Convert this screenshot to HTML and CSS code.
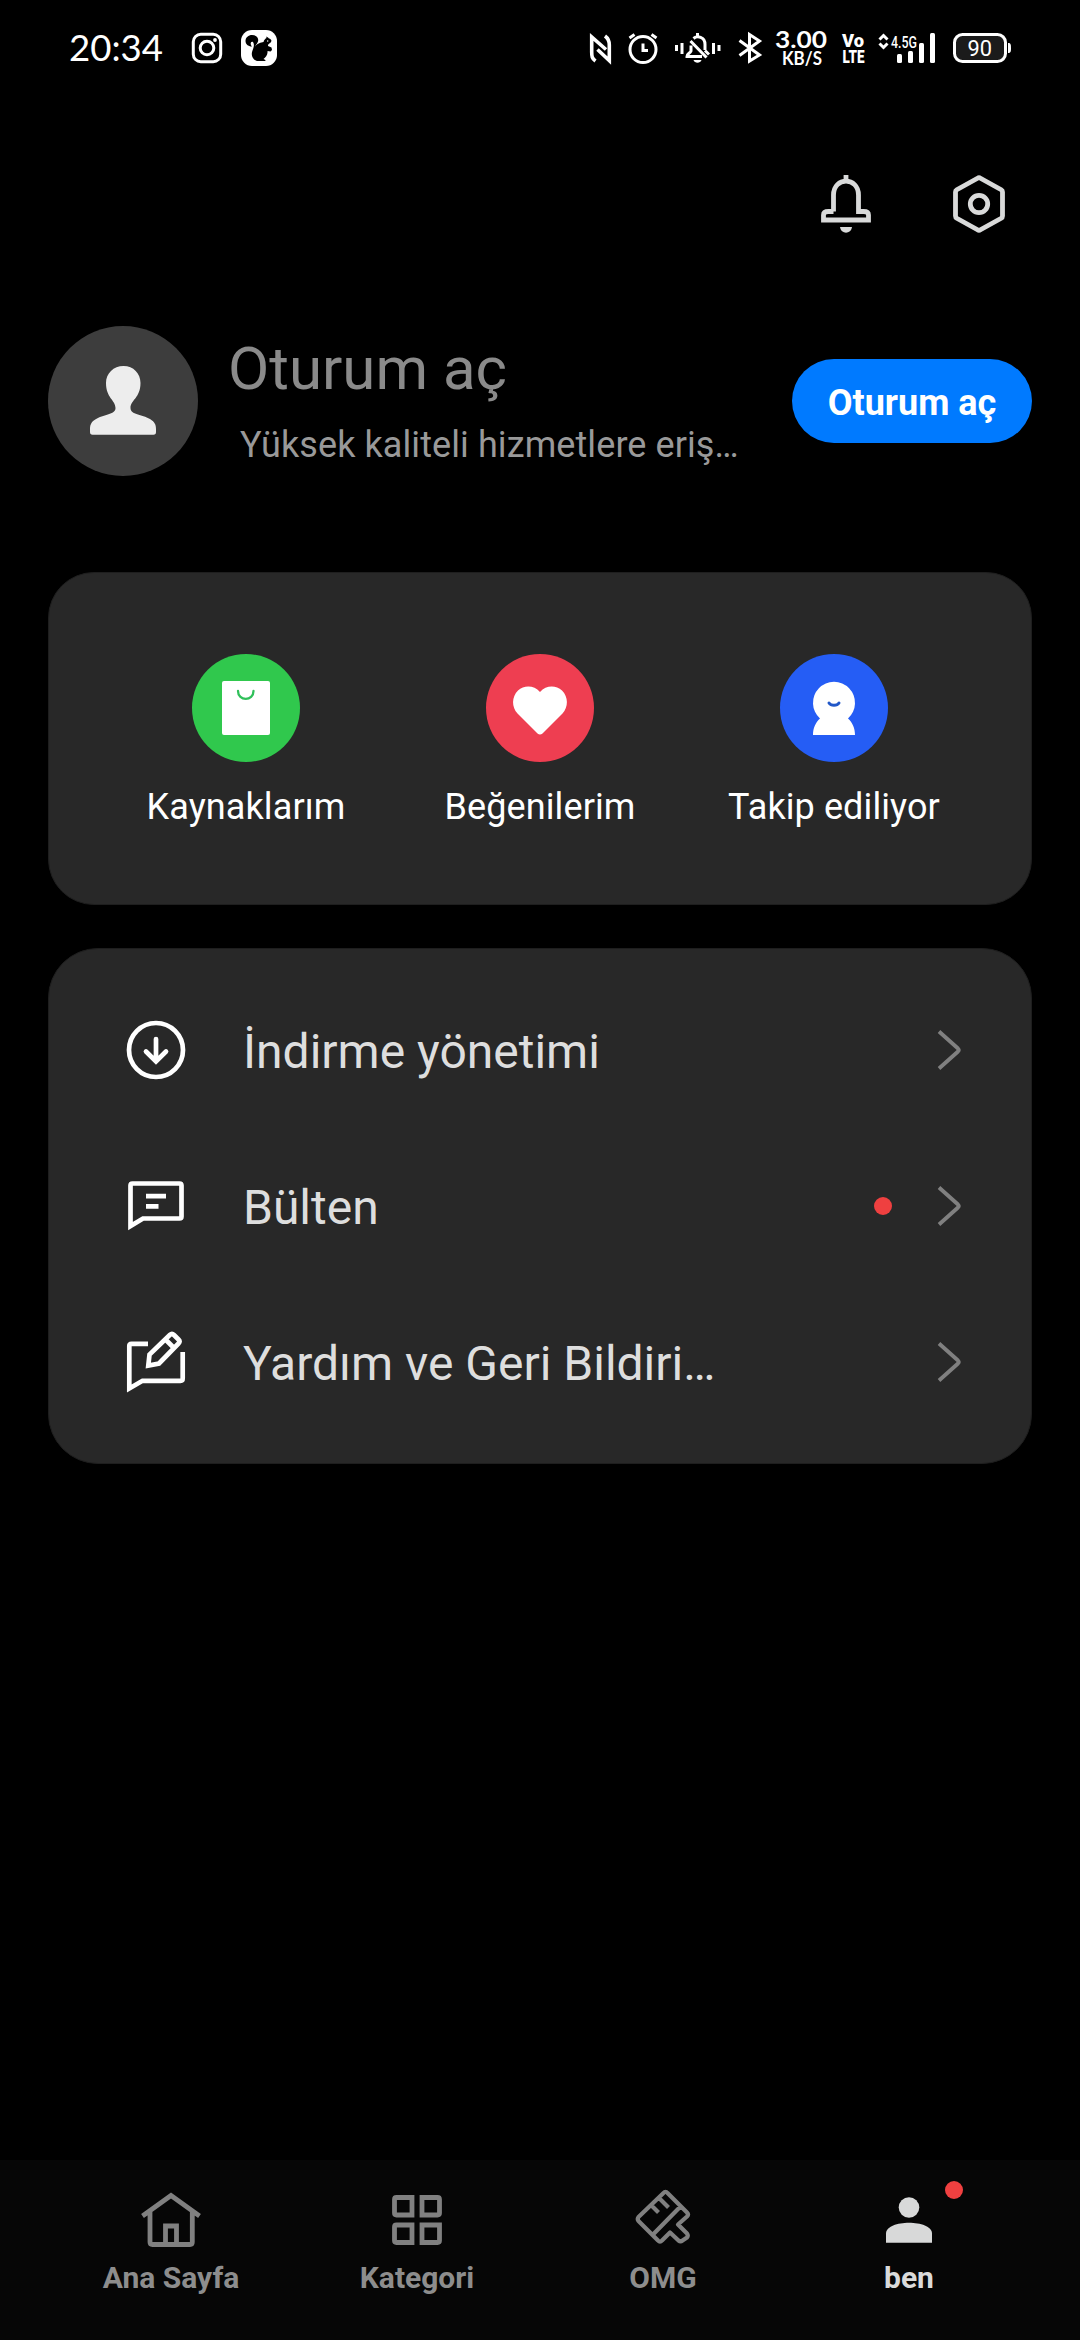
FILE: index.html
```html
<!DOCTYPE html>
<html lang="tr">
<head>
<meta charset="utf-8">
<title>Profil</title>
<link rel="stylesheet" href="styles.css">
</head>
<body>
<div class="screen">
  <header class="status">
    <svg class="status-left" width="240" height="96" viewBox="60 0 240 96">
      <text class="clock" x="69" y="61" textLength="94" lengthAdjust="spacingAndGlyphs">20:34</text>
      <g class="line">
        <rect x="193.3" y="34.3" width="27.4" height="27.4" rx="7.5"/>
        <circle cx="207" cy="48" r="6.8"/>
      </g>
      <circle class="solid" cx="215" cy="40" r="1.9"/>
      <rect class="solid" x="241" y="30" width="36" height="36" rx="11"/>
      <path class="ink" d="M252 46.500C248 46.500 245.500 44 245.500 41C245.500 37.500 248.500 35 252 35C256.500 35 259 38 258 41.500C257.200 44 255 45.500 254 48C255.500 44.500 259 42.500 263.500 42C264 40 265.500 38.500 266.500 38L266.300 36.500L268 37.500L269 38.500C271 39 272 40.500 271 42C270 43.500 268 43.500 268 46L271.500 47.500L272 50L270.500 51.500L267.500 51C268 54.500 265.500 57.500 263.500 59C265 59.500 265.500 60 265.500 61H257C252 59.500 250.800 54.500 252.500 50.500C254 47 254.500 44 253 42C251 40.500 249.500 44 252 46.500Z"/>
      <circle class="solid" cx="267.700" cy="41" r=".7"/>
    </svg>
    <svg class="status-right" width="460" height="96" viewBox="570 0 460 96">
      <g class="line">
        <path class="nfc" d="M595.500 61C592 58.500 591.700 56.500 591.700 52V37L606 49.500M605 36C608.500 38.500 609.300 41 609.300 45V60.500L597.500 49.500"/>
        <circle cx="643" cy="49.500" r="13"/>
        <path d="M629.500 38L634.500 34.500M656.500 38L651.500 34.500M643 43.500V50.500H648"/>
        <path d="M676.500 45V51M682 43V54M713.500 43V54M719 45V51M690.500 41L706.500 57.500M691 45.500V51C690 53.500 687 53.500 687 56.500H702M693.500 38.500C697 35.500 705 36.500 705 44.500V50M697.500 33V36M705 50.500L709 54.500"/>
        <path d="M739.500 40.500L759.500 55L749.500 61V34.500L759.500 41L739.500 55.500"/>
        <rect class="battery" x="954.500" y="34.500" width="51" height="27" rx="8"/>
      </g>
      <path class="solid" d="M693.500 60H701.500C700.500 63.500 694.500 63.500 693.500 60ZM1008 43C1011 43 1011 45 1011 48S1011 53 1008 53Z"/>
      <text class="net" x="775" y="47.500" textLength="52" lengthAdjust="spacingAndGlyphs">3.00</text>
      <text class="unit" x="782" y="65" textLength="40" lengthAdjust="spacingAndGlyphs">KB/S</text>
      <text class="volte" x="842" y="47" textLength="22" lengthAdjust="spacingAndGlyphs">Vo</text>
      <text class="volte" x="842.500" y="63" textLength="22" lengthAdjust="spacingAndGlyphs">LTE</text>
      <path class="line" d="M879.500 39.500L883.500 35.500L887.500 39.500M879.500 43.500L883.500 47.500L887.500 43.500"/>
      <text class="gen" x="891" y="47.500" textLength="26" lengthAdjust="spacingAndGlyphs">4.5G</text>
      <g class="solid">
        <rect x="897" y="54" width="5" height="9" rx="1.500"/>
        <rect x="908" y="51" width="5" height="12" rx="1.500"/>
        <rect x="919" y="43" width="5" height="20" rx="1.500"/>
        <rect x="930" y="33" width="5" height="30" rx="1.500"/>
      </g>
      <text class="percent" x="967.500" y="55.500" textLength="24.500" lengthAdjust="spacingAndGlyphs">90</text>
    </svg>
  </header>

  <div class="toolbar">
    <svg width="60" height="66" viewBox="816 171 60 66" class="tool">
      <path d="M846 175V181M833.500 211.500V195C833.500 176.500 858.500 176.500 858.500 195V211.500H863.500Q868.500 211.500 868.500 215V220H823.500V215Q823.500 211.500 828.500 211.500H833.500"/>
      <path class="tool-fill" d="M840 227H852C851 234.500 841 234.500 840 227Z"/>
    </svg>
    <svg width="60" height="66" viewBox="949 171 60 66" class="tool">
      <path d="M977.500 178.300Q979 177.300 980.500 178.300L1001.200 189.700Q1002.500 190.500 1002.500 192V216Q1002.500 217.500 1001.200 218.300L980.500 229.700Q979 230.700 977.500 229.700L956.800 218.300Q955.500 217.500 955.500 216V192Q955.500 190.500 956.800 189.700Z"/>
      <circle cx="979" cy="204" r="8.700"/>
    </svg>
  </div>

  <section class="profile">
    <div class="avatar">
      <svg width="66" height="70" viewBox="89 366 66 70"><path fill="#ededed" d="M122.500 366C132.500 366 139.500 373.500 139.500 383C139.500 398 129.500 400 129.500 408C129.500 415 141 414 149 419C154 422 155 425 155 429V432Q155 434.800 152.500 434.800H91.500Q89 434.800 89 432V429C89 424 91 421 96 418.500C104 414 114.500 414.500 114.500 408C114.500 400 105 398 105 383C105 373.500 112.500 366 122.500 366Z"/></svg>
    </div>
    <div class="who">
      <h1>Oturum aç</h1>
      <p>Yüksek kaliteli hizmetlere eriş…</p>
    </div>
    <button class="login" type="button">Oturum aç</button>
  </section>

  <section class="card shortcuts">
    <div class="shortcut">
      <svg width="108" height="108" viewBox="0 0 108 108"><circle cx="54" cy="54" r="54" fill="#30c84d"/><rect x="30" y="27" width="48" height="54" rx="2" fill="#fff"/><path d="M46 37C46 47.500 61.500 47.500 61.500 37" fill="none" stroke="#30c05a" stroke-width="2.300" stroke-linecap="round"/></svg>
      <span>Kaynaklarım</span>
    </div>
    <div class="shortcut">
      <svg width="108" height="108" viewBox="0 0 108 108"><circle cx="54" cy="54" r="54" fill="#ee3e51"/><path fill="#fff" d="M54 38C60 31 70 31 76 36.500C82.500 43 82.500 53 76.500 59.500L56.500 79.500Q54 81.500 51.500 79.500L31.500 59.500C25.500 53 25.500 43 32 36.500C38 31 48 31 54 38Z"/></svg>
      <span>Beğenilerim</span>
    </div>
    <div class="shortcut">
      <svg width="108" height="108" viewBox="0 0 108 108"><circle cx="54" cy="54" r="54" fill="#255df5"/><path fill="#fff" d="M40 64.500A21 21 0 1 1 68 64.500C72.500 68.500 75 74 75 81H33C33 74 35.500 68.500 40 64.500Z"/><path d="M49 49C51 52 57 52 59 49" fill="none" stroke="#2258c8" stroke-width="3" stroke-linecap="round"/></svg>
      <span>Takip ediliyor</span>
    </div>
  </section>

  <section class="card menu">
    <div class="row">
      <svg class="lead" width="66" height="66" viewBox="123 1017 66 66"><circle cx="156" cy="1050" r="27"/><path class="round" d="M156 1039V1061M146 1051.500L156 1061.500L166 1051.500"/></svg>
      <span class="label">İndirme yönetimi</span>
      <svg class="chev" width="26" height="42" viewBox="0 0 26 42"><path d="M2 2.500L21 19.500Q22.500 21 21 22.500L2 39.500"/></svg>
    </div>
    <div class="row">
      <svg class="lead" width="66" height="66" viewBox="123 1173 66 66"><path d="M130.500 1226V1185.500Q130.500 1183.500 132.500 1183.500H179.500Q181.500 1183.500 181.500 1185.500V1216.500Q181.500 1218.500 179.500 1218.500H143ZM146 1196.200H166M146 1206.300H158.500"/></svg>
      <span class="label">Bülten</span>
      <i class="dot"></i>
      <svg class="chev" width="26" height="42" viewBox="0 0 26 42"><path d="M2 2.500L21 19.500Q22.500 21 21 22.500L2 39.500"/></svg>
    </div>
    <div class="row">
      <svg class="lead" width="66" height="66" viewBox="123 1329 66 66"><path d="M148 1343.800H131.500Q129.300 1343.800 129.300 1346V1388.500L142.500 1380.800H180.500Q182.700 1380.800 182.700 1378.500V1352M148.300 1365.500L149.500 1354.500L170 1334.800Q172 1333 174 1335L178.500 1339.500Q180.500 1341.500 178.500 1343.500L159 1363.500ZM165.500 1339.500L174 1348"/></svg>
      <span class="label">Yardım ve Geri Bildiri…</span>
      <svg class="chev" width="26" height="42" viewBox="0 0 26 42"><path d="M2 2.500L21 19.500Q22.500 21 21 22.500L2 39.500"/></svg>
    </div>
  </section>

  <nav class="tabs">
    <div class="tab">
      <svg width="66" height="66" viewBox="138 2184 66 66"><path d="M142.500 2216L171 2195.500L199.500 2216M150 2211V2242Q150 2244.500 152.500 2244.500H190Q192.300 2244.500 192.300 2242V2211M165.500 2244.500V2226H176.500V2244.500"/></svg>
      <span>Ana Sayfa</span>
    </div>
    <div class="tab">
      <svg width="66" height="66" viewBox="384 2184 66 66"><path d="M396.500 2197.500H412V2215H396.500Q394.500 2215 394.500 2213V2199.500Q394.500 2197.500 396.500 2197.500ZM422 2197.500H437.500Q439.500 2197.500 439.500 2199.500V2213Q439.500 2215 437.500 2215H422ZM396.500 2225H412V2242.500H396.500Q394.500 2242.500 394.500 2240.500V2227Q394.500 2225 396.500 2225ZM422 2225H439.500V2240.500Q439.500 2242.500 437.500 2242.500H422Z"/></svg>
      <span>Kategori</span>
    </div>
    <div class="tab">
      <svg class="brush" width="66" height="66" viewBox="630 2184 66 66"><path d="M667.500 2193L687 2212.500Q689 2214.500 687 2216.500L678 2224.500L687 2233.500Q688.500 2235.500 687 2237.500L682.500 2240.500Q680.500 2242 678.500 2240.500L670 2232.500L662 2240.500Q660 2243 658 2240.500L638.500 2221Q637 2219 638.500 2217L663.500 2193Q665.500 2190.500 667.500 2193ZM680 2207L653 2234.500M652 2206L658.500 2212.500M659.500 2198.500L668.500 2207.500"/></svg>
      <span>OMG</span>
    </div>
    <div class="tab active">
      <svg width="66" height="66" viewBox="876 2184 66 66"><circle cx="909" cy="2207.500" r="10.300"/><path d="M886 2242.700V2233.500C886 2219 932 2219 932 2233.500V2242.700Z"/></svg>
      <span>ben</span>
      <i class="dot badge"></i>
    </div>
  </nav>
</div>
</body>
</html>
```
FILE: styles.css
```css
* { box-sizing: border-box; }
body { margin: 0; background: #000; font-family: Roboto, sans-serif; }
svg { display: block; flex: none; }
h1, p { margin: 0; font-weight: 400; white-space: nowrap; }

.screen { width: 1080px; height: 2340px; display: flex; flex-direction: column; background: #000; }

.status { height: 96px; padding: 0 50px 0 60px; display: flex; justify-content: space-between; }
.status text { fill: #fff; }
.line { fill: none; stroke: #fff; stroke-width: 3; }
.nfc { stroke-width: 3.6; }
.solid { fill: #fff; }
.ink { fill: #000; }
.battery { fill: #1b1b1b; stroke-width: 3; }
.clock { font: 400 37.500px Lato, sans-serif; }
.net { font: 700 22px Lato, sans-serif; }
.unit { font: 700 18px Lato, sans-serif; }
.volte { font: 900 17.500px Roboto, sans-serif; }
.gen { font: 500 17px Roboto, sans-serif; }
.percent { font: 400 21.500px Roboto, sans-serif; }

.toolbar { height: 216px; padding: 75px 71px 0 0; display: flex; justify-content: flex-end; gap: 73px; }
.tool { fill: none; stroke: #d9dada; stroke-width: 4.8; }
.tool-fill { fill: #d9dada; stroke: none; }

.profile { height: 178px; margin: 14px 48px 0; display: flex; align-items: flex-start; }
.avatar { width: 150px; height: 150px; border-radius: 50%; background: #3d3d3d; display: flex; justify-content: center; padding-top: 40px; flex: none; }
.who { flex: 1; padding: 7px 0 0 30px; }
.who h1 { font-size: 60px; line-height: 72px; color: #8a8a8a; }
.who p { padding-left: 12px; margin-top: 18px; font-size: 36px; line-height: 44px; letter-spacing: .09px; color: #999; }
.login { width: 240px; height: 84px; margin-top: 33px; padding: 4px 0 0; border: 0; border-radius: 42px; background: #007aff; color: #fff; font: 700 36px/44px Roboto, sans-serif; }

.card { margin: 0 48px; background: #282828; border: 1px solid #1e1e1e; border-radius: 46px; }
.shortcuts { height: 333px; margin-top: 68px; padding: 81px 50px 0; display: grid; grid-template-columns: repeat(3, 1fr); }
.shortcut { display: flex; flex-direction: column; align-items: center; gap: 23px; color: #fff; font-size: 36px; line-height: 44px; letter-spacing: .1px; white-space: nowrap; }
.menu { height: 516px; margin-top: 43px; padding: 23px 68px 0 74px; border-radius: 50px; }
.row { height: 156px; display: flex; align-items: center; }
.lead { fill: none; stroke: #fff; stroke-width: 4.700; }
.round { stroke-linecap: round; }
.label { flex: 1; margin-left: 54px; padding-top: 4px; font-size: 48px; line-height: 56px; color: #dedede; }
.chev { fill: none; stroke: #808080; stroke-width: 3.800; }
.dot { width: 18px; height: 18px; margin-right: 45px; border-radius: 50%; background: #ef4040; }

.tabs { height: 180px; margin-top: auto; padding: 24px 48px 0; background: #060606; display: grid; grid-template-columns: repeat(4, 1fr); }
.tab { position: relative; display: flex; flex-direction: column; align-items: center; gap: 10px; color: #8d8d8d; font-size: 30px; font-weight: 700; line-height: 36px; }
.tab svg { fill: none; stroke: #808080; stroke-width: 4.800; }
.tab .brush { stroke-width: 4.200; stroke-linejoin: round; }
.tab.active { color: #dadada; }
.tab.active svg { fill: #d8d9d9; stroke: none; }
.badge { position: absolute; left: 159px; top: -3px; margin: 0; }
```
